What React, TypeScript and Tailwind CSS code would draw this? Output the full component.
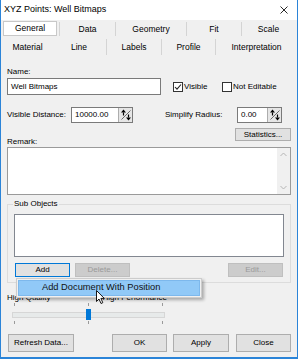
import React from 'react';

const SpinGlyph = () => (
  <svg width="12" height="12" viewBox="0 0 12 12">
    <path d="M1.5 10.5 L10.5 1.5" stroke="#6b6b6b" strokeWidth="1" />
    <path d="M3.5 0.5 L6 3.5 L1 3.5 Z" fill="#000" />
    <path d="M3.5 3.5 V6.5" stroke="#000" strokeWidth="1.2" />
    <path d="M8.5 11.5 L11 8.5 L6 8.5 Z" fill="#000" />
    <path d="M8.5 5.5 V8.5" stroke="#000" strokeWidth="1.2" />
  </svg>
);

function SpinBox({ value, width }: { value: string; width: string }) {
  return (
    <div className={`${width} h-[16px] bg-white border border-[#7a7a7a] flex items-stretch`}>
      <div className="flex-1 pl-[3px] flex items-center leading-none">{value}</div>
      <div className="w-[14px] bg-[#e6e6e6] border-l border-[#adadad] flex items-center justify-center">
        <SpinGlyph />
      </div>
    </div>
  );
}

function CheckBox({ label, checked }: { label: string; checked?: boolean }) {
  return (
    <div className="flex items-center gap-[1px]">
      <div className="w-[10px] h-[10px] bg-white border border-[#333333] flex items-center justify-center">
        {checked && (
          <svg width="8" height="8" viewBox="0 0 8 8">
            <path d="M1 4 L3 6.2 L7 1.5" stroke="#222" strokeWidth="1.1" fill="none" />
          </svg>
        )}
      </div>
      <span>{label}</span>
    </div>
  );
}

function Button({ label, width, disabled, focused }: { label: string; width: string; disabled?: boolean; focused?: boolean }) {
  const look = disabled
    ? 'bg-[#cccccc] border-[#bfbfbf] text-[#9a9a9a]'
    : focused
      ? 'bg-[#e1e1e1] border-[#0078d7] text-black'
      : 'bg-[#e1e1e1] border-[#adadad] text-black';
  return <div className={`${width} h-full border flex items-center justify-center leading-none ${look}`}>{label}</div>;
}

const ROW1 = [
  { label: 'Data', w: 'w-[56px]' },
  { label: 'Geometry', w: 'w-[71px]' },
  { label: 'Fit', w: 'w-[55px]' },
  { label: 'Scale', w: 'w-[54px]' },
];

const ROW2 = [
  { label: 'Labels', w: 'w-[55px]' },
  { label: 'Profile', w: 'w-[54px]' },
  { label: 'Interpretation', w: 'flex-1' },
];

export default function App() {
  return (
    <div className="relative w-[298px] h-[359px] overflow-hidden bg-[#f0f0f0] border-x border-b-2 border-[#2b84d8] flex flex-col font-['Liberation_Sans',Arial,sans-serif] text-[8px] text-black">
      {/* Title bar */}
      <div className="h-[20px] bg-white flex items-center justify-between pl-[3px] pr-[9px]">
        <span className="text-[9px]">XYZ Points: Well Bitmaps</span>
        <svg width="8" height="8" viewBox="0 0 8 8">
          <path d="M0.5 0.5 L7.5 7.5 M7.5 0.5 L0.5 7.5" stroke="#111" strokeWidth="0.9" />
        </svg>
      </div>

      {/* Tabs */}
      <div className="h-[18px] flex pl-[2px] text-[8.5px]">
        <div className="w-[56px] h-full pr-[2px] pt-[1px] pb-[2px]">
          <div className="h-full bg-white border border-[#c8c8c8] flex items-center justify-center">General</div>
        </div>
        {ROW1.map(t => (
          <div key={t.label} className={`${t.w} h-full flex items-center`}>
            <div className="h-[14px] border-l border-[#d4d4d4]" />
            <span className="flex-1 text-center">{t.label}</span>
          </div>
        ))}
      </div>
      <div className="h-[18px] flex pl-[2px] text-[8.5px]">
        <div className="w-[49px] flex items-center justify-center">Material</div>
        <div className="w-[54px] flex items-center justify-center">Line</div>
        {ROW2.map(t => (
          <div key={t.label} className={`${t.w} h-full flex items-center`}>
            <div className="h-[16px] border-l border-[#d4d4d4]" />
            <span className="flex-1 text-center">{t.label}</span>
          </div>
        ))}
      </div>

      {/* Tab page */}
      <div className="flex-1 px-[6px] flex flex-col">
        <div className="mt-[11px] h-[10px] leading-[10px]">Name:</div>
        <div className="mt-[1px] h-[17px] flex items-center">
          <div className="w-[154px] h-full bg-white border border-[#7a7a7a] pl-[3px] flex items-center">Well Bitmaps</div>
          <div className="ml-[12px] w-[49px]">
            <CheckBox label="Visible" checked />
          </div>
          <CheckBox label="Not Editable" />
        </div>

        <div className="mt-[12px] h-[16px] flex items-center">
          <span className="w-[64px]">Visible Distance:</span>
          <SpinBox value="10000.00" width="w-[62px]" />
          <span className="ml-[32px] w-[72px]">Simplify Radius:</span>
          <SpinBox value="0.00" width="w-[45px]" />
        </div>

        <div className="mt-[5px] h-[19px] flex justify-between">
          <span className="self-end h-[10px] leading-[10px]">Remark:</span>
          <div className="self-start h-[13px] flex">
            <Button label="Statistics..." width="w-[56px]" />
          </div>
        </div>

        <div className="h-[48px] bg-white border border-[#9a9a9a] flex justify-end">
          <div className="w-[13px] bg-[#f0f0f0] flex flex-col items-center justify-between py-[4px]">
            <svg width="7" height="5" viewBox="0 0 7 5">
              <path d="M0.5 4 L3.5 1 L6.5 4" stroke="#b5b5b5" fill="none" />
            </svg>
            <svg width="7" height="5" viewBox="0 0 7 5">
              <path d="M0.5 1 L3.5 4 L6.5 1" stroke="#b5b5b5" fill="none" />
            </svg>
          </div>
        </div>

        {/* Sub Objects group */}
        <div className="mt-[9px] border border-[#dcdcdc] px-[6px] pb-[5px] flex flex-col">
          <div className="-mt-[6px] h-[10px] leading-[10px] w-fit bg-[#f0f0f0] px-[1px] -ml-[1px]">Sub Objects</div>
          <div className="mt-[5px] h-[43px] bg-white border border-[#828790]" />
          <div className="mt-[6px] h-[14px] flex pl-[1px] pr-[1px]">
            <Button label="Add" width="w-[55px]" focused />
            <div className="ml-[5px] h-full">
              <Button label="Delete..." width="w-[55px]" disabled />
            </div>
            <div className="ml-auto h-full">
              <Button label="Edit..." width="w-[55px]" disabled />
            </div>
          </div>
        </div>

        {/* Slider */}
        <div className="mt-[10px] w-[160px] h-[10px] leading-[10px] flex justify-between">
          <span>High Quality</span>
          <span>High Performance</span>
        </div>
        <div className="ml-[5px] w-[153px] flex flex-col">
          <div className="h-[3px] flex justify-between px-[2px]">
            <div className="border-l border-[#9a9a9a]" />
            <div className="border-l border-[#9a9a9a]" />
            <div className="border-l border-[#9a9a9a]" />
          </div>
          <div className="mt-[3px] h-[11px] flex items-center">
            <div className="w-full h-[6px] bg-[#e7eaea] border border-[#d6d6d6] flex items-center justify-center">
              <div className="w-[5px] h-[11px] shrink-0 bg-[#0078d7]" />
            </div>
          </div>
          <div className="mt-[1px] h-[3px] flex justify-between px-[2px]">
            <div className="border-l border-[#9a9a9a]" />
            <div className="border-l border-[#9a9a9a]" />
            <div className="border-l border-[#9a9a9a]" />
          </div>
        </div>

        {/* Dialog buttons */}
        <div className="mt-auto mb-[5px] h-[18px] flex">
          <div className="ml-[1px] h-full">
            <Button label="Refresh Data..." width="w-[66px]" />
          </div>
          <div className="ml-auto h-full flex">
            <Button label="OK" width="w-[55px]" />
            <div className="ml-[6px] h-full">
              <Button label="Apply" width="w-[56px]" />
            </div>
            <div className="ml-[7px] h-full">
              <Button label="Close" width="w-[55px]" />
            </div>
          </div>
        </div>
      </div>

      {/* Context menu */}
      <div className="absolute left-[15px] top-[278px] w-[186px] h-[20px] bg-[#f0f0f0] border border-[#cccccc] p-[1px] shadow-[2px_2px_3px_rgba(0,0,0,0.3)]">
        <div className="h-full bg-[#91c9f7] border border-[#7db8ec] pl-[23px] flex items-center text-[9.3px] text-[#111]">
          Add Document With Position
        </div>
      </div>

      {/* Mouse cursor */}
      <svg className="absolute left-[95px] top-[290px]" width="10" height="15" viewBox="0 0 10 15">
        <path d="M0.5 0.5 L0.5 11.5 L3 9 L5 13.5 L6.8 12.7 L4.9 8.4 L8.3 8.4 Z" fill="#fff" stroke="#000" strokeWidth="0.9" strokeLinejoin="round" />
      </svg>
    </div>
  );
}
